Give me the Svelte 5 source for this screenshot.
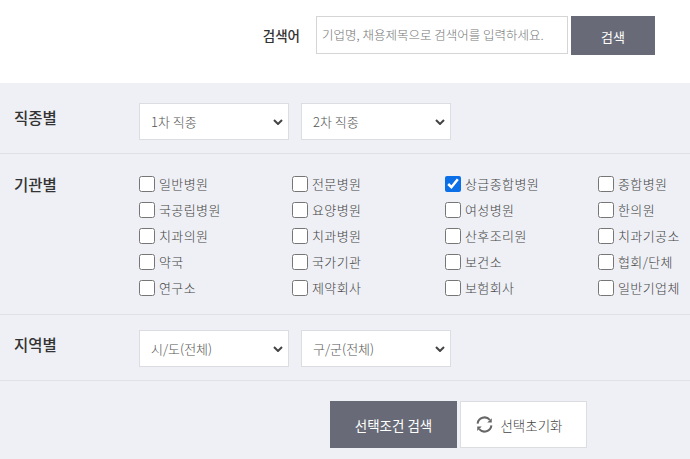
<script>
	const agencies = [
		'일반병원', '전문병원', '상급종합병원', '종합병원',
		'국공립병원', '요양병원', '여성병원', '한의원',
		'치과의원', '치과병원', '산후조리원', '치과기공소',
		'약국', '국가기관', '보건소', '협회/단체',
		'연구소', '제약회사', '보험회사', '일반기업체'
	];
</script>

<div class="page">
	<form class="keyword">
		<label class="keyword-label" for="kw">검색어</label>
		<input id="kw" type="text" placeholder="기업명, 채용제목으로 검색어를 입력하세요." />
		<button type="button" class="keyword-btn">검색</button>
	</form>

	<div class="filters">
		<section class="row row-select">
			<h3>직종별</h3>
			<div class="selects">
				<select><option>1차 직종</option></select>
				<select><option>2차 직종</option></select>
			</div>
		</section>

		<section class="row row-check">
			<h3>기관별</h3>
			<div class="checks">
				{#each agencies as name}
					<label class="check">
						<input type="checkbox" checked={name === '상급종합병원'} />
						<span>{name}</span>
					</label>
				{/each}
			</div>
		</section>

		<section class="row row-select row-area">
			<h3>지역별</h3>
			<div class="selects">
				<select><option>시/도(전체)</option></select>
				<select><option>구/군(전체)</option></select>
			</div>
		</section>

		<div class="actions">
			<button type="button" class="btn-search">선택조건 검색</button>
			<button type="button" class="btn-reset">
				<svg width="17" height="17" viewBox="0 0 16 16" fill="none" aria-hidden="true">
					<path d="M1.5 7.2A6.6 6.6 0 0 1 13 3.6" stroke="#666" stroke-width="1.9" />
					<path d="M14.5 8.8A6.6 6.6 0 0 1 3 12.4" stroke="#666" stroke-width="1.9" />
					<path d="M14.8 2v4.2h-4.2z" fill="#666" />
					<path d="M1.2 14v-4.2h4.2z" fill="#666" />
				</svg>
				선택초기화
			</button>
		</div>
	</div>
</div>

<style>
	:global(body) {
		margin: 0;
		background: #fff;
		font-family: 'Noto Sans CJK KR', 'Noto Sans', sans-serif;
	}

	.page {
		width: 690px;
		height: 459px;
		overflow: hidden;
		color: #333;
	}

	.keyword {
		height: 83px;
		box-sizing: border-box;
		padding: 16px 35px 0 0;
		display: flex;
		justify-content: flex-end;
		align-items: flex-start;
		background: #fff;
	}

	.keyword-label {
		font-size: 13.5px;
		font-weight: 500;
		line-height: 38px;
		margin-right: 16px;
		color: #333;
	}

	.keyword input {
		width: 252px;
		height: 38px;
		box-sizing: border-box;
		border: 1px solid #d5d5d5;
		padding: 0 5px 2px;
		margin-right: 3px;
		font: 300 12.5px 'Noto Sans CJK KR', sans-serif;
		background: #fff;
	}

	.keyword input::placeholder {
		color: #777;
		opacity: 1;
	}

	.keyword-btn {
		width: 84px;
		height: 39px;
		border: 0;
		background: #686b77;
		color: #fff;
		font: 400 13px 'Noto Sans CJK KR', sans-serif;
		padding: 2px 0 0;
	}

	.filters {
		background: #eef0f5;
		height: 376px;
	}

	.row {
		display: flex;
		border-bottom: 1px solid #dfe1e5;
		box-sizing: border-box;
	}

	.row h3 {
		width: 139px;
		flex: none;
		box-sizing: border-box;
		padding-left: 14px;
		margin: 0;
		font-size: 15.5px;
		font-weight: 500;
		color: #333;
	}

	.row-select {
		height: 71px;
		padding-top: 20px;
	}

	.row-select h3 {
		line-height: 29px;
	}

	.row-area {
		height: 66px;
		padding-top: 15px;
	}

	.selects {
		display: flex;
		gap: 12px;
	}

	select {
		appearance: none;
		width: 150px;
		height: 37px;
		box-sizing: border-box;
		border: 1px solid #dcdde1;
		border-radius: 0;
		background: #fff url("data:image/svg+xml,%3Csvg xmlns='http://www.w3.org/2000/svg' width='10' height='6' viewBox='0 0 10 6'%3E%3Cpath d='M1 1l4 4 4-4' fill='none' stroke='%23444' stroke-width='2'/%3E%3C/svg%3E") no-repeat right 5px center;
		color: #555;
		padding: 0 11px;
		font: 300 13px 'Noto Sans CJK KR', sans-serif;
	}

	.row-check {
		height: 161px;
		padding-top: 17px;
	}

	.row-check h3 {
		line-height: 27px;
	}

	.checks {
		display: grid;
		grid-template-columns: repeat(4, 153px);
		grid-auto-rows: 26px;
		width: 551px;
		flex: none;
	}

	.check {
		display: flex;
		align-items: center;
		white-space: nowrap;
		font-size: 13px;
		letter-spacing: 0.4px;
		font-weight: 300;
		color: #444;
		height: 26px;
	}

	.check span {
		margin-top: -2px;
	}

	.check input {
		width: 16px;
		height: 16px;
		margin: 0 4px 0 0;
		flex: none;
		accent-color: #0b6fe8;
	}

	.actions {
		display: flex;
		gap: 3px;
		padding: 20px 0 0 330px;
	}

	.actions button {
		height: 47px;
		font-family: 'Noto Sans CJK KR', sans-serif;
		font-size: 13.5px;
	}

	.btn-search {
		width: 127px;
		border: 0;
		background: #686b77;
		color: #fff;
		font-weight: 400;
	}

	.btn-reset {
		width: 127px;
		box-sizing: border-box;
		border: 1px solid #dcdde1;
		background: #fff;
		color: #444;
		font-weight: 300;
		display: flex;
		align-items: center;
		justify-content: center;
		gap: 7px;
		padding: 0 8px 0 0;
	}
</style>
